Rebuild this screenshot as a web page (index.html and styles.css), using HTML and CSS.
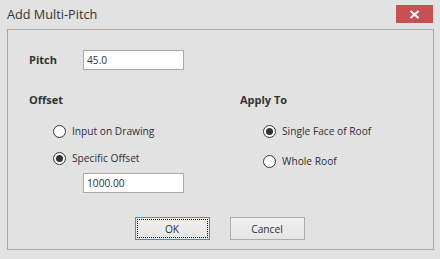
FILE: index.html
```html
<!DOCTYPE html>
<html lang="en">
<head>
    <meta charset="UTF-8">
    <title>Add Multi-Pitch</title>
    <link rel="stylesheet" href="styles.css">
</head>
<body>
    <div class="window">
        <div class="titlebar">
            <span class="title">Add Multi-Pitch</span>
            <button class="close-btn" aria-label="Close">
                <svg width="11" height="9" viewBox="0 0 11 9">
                    <path d="M1.5 1 L9.5 8 M9.5 1 L1.5 8" stroke="#fff" stroke-width="2.2"/>
                </svg>
            </button>
        </div>

        <div class="group">
            <div class="pitch-row">
                <label class="field-label">Pitch</label>
                <input class="text-input" type="text" value="45.0">
            </div>

            <div class="columns">
                <div class="col col-offset">
                    <div class="field-label">Offset</div>
                    <label class="radio first">
                        <span class="radio-circle"></span>
                        Input on Drawing
                    </label>
                    <label class="radio second">
                        <span class="radio-circle checked"></span>
                        Specific Offset
                    </label>
                    <input class="text-input offset-input" type="text" value="1000.00">
                </div>
                <div class="col col-apply">
                    <div class="field-label">Apply To</div>
                    <label class="radio first">
                        <span class="radio-circle checked"></span>
                        Single Face of Roof
                    </label>
                    <label class="radio third">
                        <span class="radio-circle"></span>
                        Whole Roof
                    </label>
                </div>
            </div>

            <div class="buttons">
                <button class="btn btn-ok"><span>OK</span></button>
                <button class="btn btn-cancel">Cancel</button>
            </div>
        </div>
    </div>
</body>
</html>
```
FILE: styles.css
```css
body {
    margin: 0;
    font-family: "Open Sans", "DejaVu Sans", sans-serif;
    font-size: 10.2px;
    color: #2e2e3a;
}
.window {
    width: 440px;
    height: 259px;
    background-color: #e2e2e2;
    box-sizing: border-box;
    overflow: hidden;
}
.titlebar {
    display: flex;
    justify-content: space-between;
    align-items: flex-start;
    height: 29px;
}
.title {
    font-size: 12.7px;
    color: #333;
    padding-left: 7px;
    margin-top: 5px;
}
.close-btn {
    width: 37px;
    height: 18px;
    margin: 5px 7px 0 0;
    padding: 0;
    border: none;
    background-color: #c75050;
    display: flex;
    align-items: center;
    justify-content: center;
}
.group {
    margin-left: 7px;
    width: 427px;
    height: 221px;
    border: 1px solid #a8a8a8;
    box-sizing: border-box;
}
.field-label {
    font-size: 11px;
    font-weight: bold;
    color: #333;
    height: 16px;
    line-height: 16px;
}
.pitch-row {
    display: flex;
    align-items: center;
    margin-top: 20px;
    padding-left: 21px;
    height: 20px;
}
.pitch-row .field-label {
    width: 54px;
}
.text-input {
    width: 101px;
    height: 20px;
    box-sizing: border-box;
    border: 1px solid #a9a9a9;
    background: #fff;
    font-family: inherit;
    font-size: 10.2px;
    color: #2e2e3a;
    padding: 0 3px;
    margin: 0;
    outline: none;
}
.columns {
    display: grid;
    grid-template-columns: 211px 1fr;
    padding-left: 21px;
    margin-top: 22px;
}
.radio {
    display: flex;
    align-items: center;
    gap: 6px;
    height: 20px;
}
.col-offset .radio {
    padding-left: 24px;
}
.col-apply .radio {
    padding-left: 23px;
}
.radio.first {
    margin-top: 13px;
}
.radio.second {
    margin-top: 7px;
}
.radio.third {
    margin-top: 10px;
}
.radio-circle {
    width: 13px;
    height: 13px;
    box-sizing: border-box;
    border: 1px solid #333;
    border-radius: 50%;
    background: #fff;
    display: flex;
    align-items: center;
    justify-content: center;
}
.radio-circle.checked::after {
    content: "";
    width: 7px;
    height: 7px;
    border-radius: 50%;
    background: #333;
}
.offset-input {
    margin: 5px 0 0 54px;
}
.buttons {
    display: flex;
    justify-content: center;
    gap: 20px;
    margin-top: 24px;
    padding-right: 2px;
}
.btn {
    width: 75px;
    height: 23px;
    box-sizing: border-box;
    font-family: inherit;
    font-size: 10.2px;
    color: #2e2e3a;
    background: linear-gradient(#f0f0f0, #e5e5e5);
    border: 1px solid #adadad;
    padding: 0;
}
.btn-ok {
    border-color: #3c8ee6;
    padding: 1px;
}
.btn-ok span {
    display: flex;
    align-items: center;
    justify-content: center;
    height: 100%;
    border: 1px dotted #111;
    box-sizing: border-box;
}
```
